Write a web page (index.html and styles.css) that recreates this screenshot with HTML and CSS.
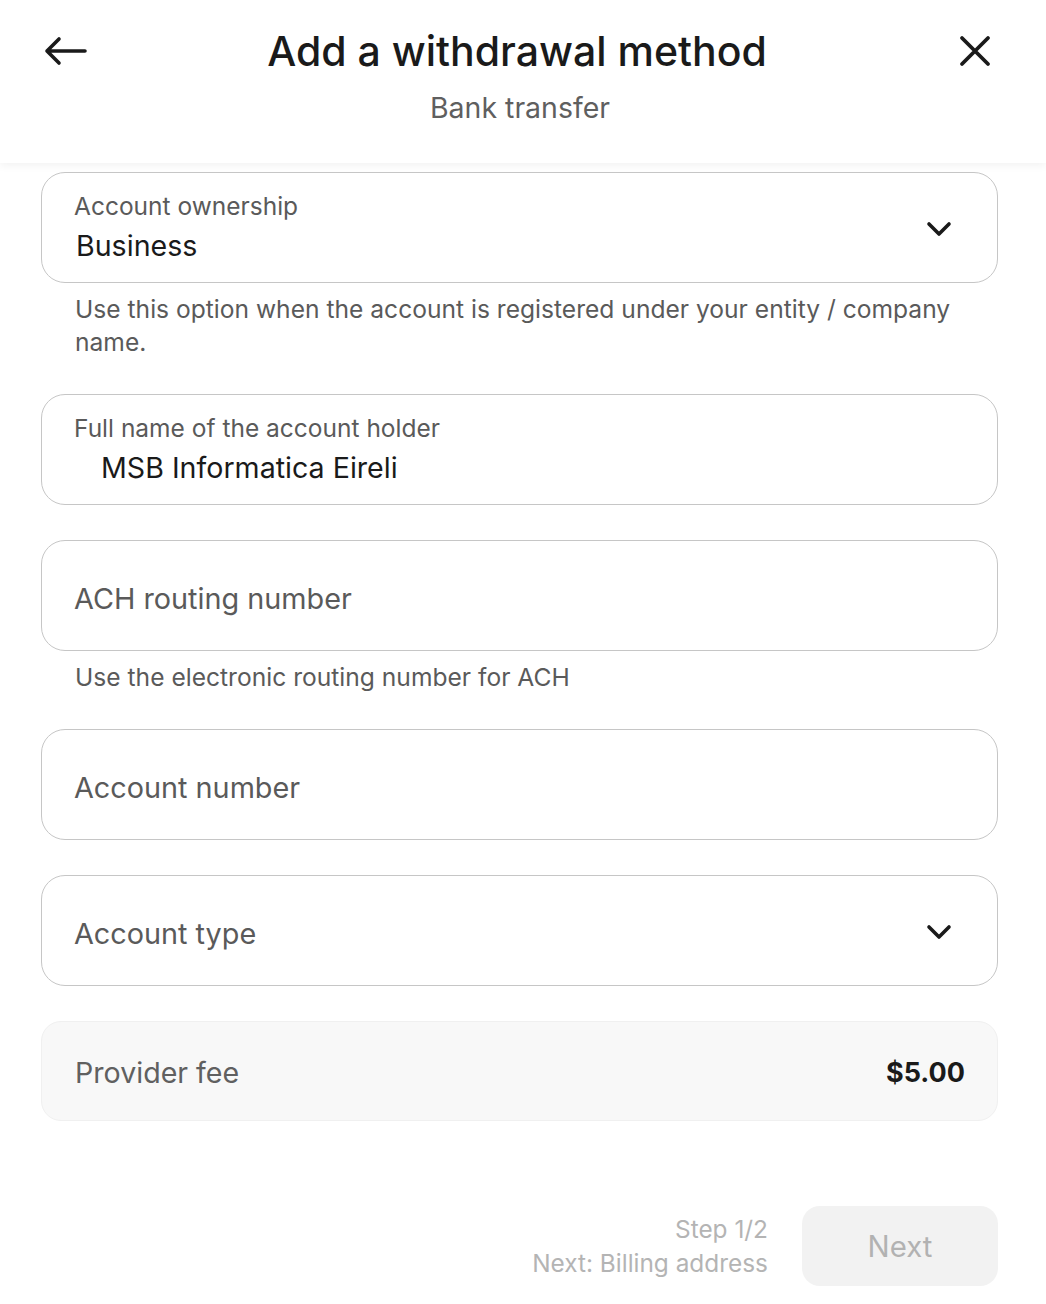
FILE: index.html
```html
<!DOCTYPE html>
<html lang="en">
<head>
<meta charset="utf-8">
<title>Add a withdrawal method</title>
<link rel="stylesheet" href="styles.css">
</head>
<body>
<header class="topbar">
  <div class="topbar-row">
    <button class="icon-btn back" aria-label="Back">
      <svg width="44" height="30" viewBox="0 0 44 30"><path d="M42 15H4M16 3L4 15l12 12" fill="none" stroke="#1a1a1a" stroke-width="3.6" stroke-linecap="round" stroke-linejoin="round"/></svg>
    </button>
    <h1 class="title">Add a withdrawal method</h1>
    <button class="icon-btn close" aria-label="Close">
      <svg width="32" height="32" viewBox="0 0 32 32"><path d="M3 3l26 26M29 3L3 29" fill="none" stroke="#1a1a1a" stroke-width="3.8" stroke-linecap="round"/></svg>
    </button>
  </div>
  <div class="subtitle">Bank transfer</div>
</header>

<main class="form">
  <div class="group">
    <div class="field select labeled">
      <div class="field-text">
        <span class="label">Account ownership</span>
        <span class="value">Business</span>
      </div>
      <svg class="chev" width="26" height="16" viewBox="0 0 26 16"><path d="M3 3l10 10L23 3" fill="none" stroke="#1a1a1a" stroke-width="3.6" stroke-linecap="round" stroke-linejoin="round"/></svg>
    </div>
    <p class="helper">Use this option when the account is registered under your entity / company name.</p>
  </div>

  <div class="group">
    <div class="field labeled">
      <div class="field-text">
        <span class="label">Full name of the account holder</span>
        <span class="value indent">MSB Informatica Eireli</span>
      </div>
    </div>
  </div>

  <div class="group">
    <div class="field">
      <span class="placeholder">ACH routing number</span>
    </div>
    <p class="helper">Use the electronic routing number for ACH</p>
  </div>

  <div class="group">
    <div class="field">
      <span class="placeholder">Account number</span>
    </div>
  </div>

  <div class="group">
    <div class="field select">
      <span class="placeholder">Account type</span>
      <svg class="chev" width="26" height="16" viewBox="0 0 26 16"><path d="M3 3l10 10L23 3" fill="none" stroke="#1a1a1a" stroke-width="3.6" stroke-linecap="round" stroke-linejoin="round"/></svg>
    </div>
  </div>

  <div class="fee">
    <span class="fee-label">Provider fee</span>
    <span class="fee-amount">$5.00</span>
  </div>
</main>

<footer class="footer">
  <div class="step">
    <span>Step 1/2</span>
    <span>Next: Billing address</span>
  </div>
  <button class="next-btn" disabled>Next</button>
</footer>
</body>
</html>
```
FILE: styles.css
```css
* { box-sizing: border-box; }
html, body {
  margin: 0;
  padding: 0;
  background: #ffffff;
  font-family: "Inter", "Noto Sans", "Liberation Sans", sans-serif;
  color: #1a1a1a;
}
.topbar {
  height: 163px;
  background: #fff;
  box-shadow: 0 3px 8px rgba(0, 0, 0, 0.05);
  position: relative;
  z-index: 1;
  padding-top: 24px;
}
.topbar-row {
  display: flex;
  align-items: center;
  justify-content: space-between;
  padding: 0 55px 0 43px;
  height: 54px;
}
.icon-btn {
  background: none;
  border: 0;
  padding: 0;
  width: 46px;
  display: flex;
  align-items: center;
  justify-content: center;
}
.back { justify-content: flex-start; }
.close { justify-content: flex-end; }
.title {
  margin: 0;
  font-size: 41px;
  font-weight: 500;
  color: #1a1a1a;
}
.subtitle {
  text-align: center;
  font-size: 28.5px;
  color: #5f5f5f;
  margin-top: 12px;
  padding-right: 6px;
}
.form {
  padding: 9px 48px 0 41px;
  display: flex;
  flex-direction: column;
  gap: 35px;
}
.group { display: flex; flex-direction: column; }
.field {
  height: 111px;
  border: 1.5px solid #c6c6c6;
  border-radius: 24px;
  display: flex;
  align-items: center;
  justify-content: space-between;
  padding: 0 45px 0 32px;
}
.field-text {
  display: flex;
  flex-direction: column;
  gap: 7px;
}
.label {
  font-size: 24.5px;
  line-height: 30px;
  color: #5a5a5a;
}
.value {
  font-size: 28.6px;
  line-height: 36px;
  color: #1a1a1a;
  padding-left: 2px;
}
.value.indent { padding-left: 27px; }
.placeholder {
  font-size: 28.8px;
  color: #5a5a5a;
  padding-top: 5px;
}
.chev { margin-top: 2px; }
.helper {
  margin: 10px 0 0;
  padding: 0 34px;
  font-size: 24.6px;
  line-height: 33px;
  color: #5a5a5a;
}
.fee {
  margin-top: 0;
  height: 100px;
  background: #f8f8f8;
  border: 1px solid #f0f0f0;
  border-radius: 20px;
  display: flex;
  align-items: center;
  justify-content: space-between;
  padding: 3px 32px 0 33px;
}
.fee-label {
  font-size: 28.6px;
  color: #606060;
}
.fee-amount {
  font-size: 27px;
  font-weight: 700;
  color: #1a1a1a;
}
.footer {
  display: flex;
  justify-content: flex-end;
  align-items: center;
  gap: 34px;
  padding: 85px 48px 0 41px;
}
.step {
  display: flex;
  flex-direction: column;
  align-items: flex-end;
  font-size: 24.4px;
  line-height: 34px;
  color: #b4b4b4;
}
.next-btn {
  width: 196px;
  height: 80px;
  border: 0;
  border-radius: 18px;
  background: #f2f2f2;
  color: #b2b2b2;
  font-family: inherit;
  font-size: 29.4px;
}
```
